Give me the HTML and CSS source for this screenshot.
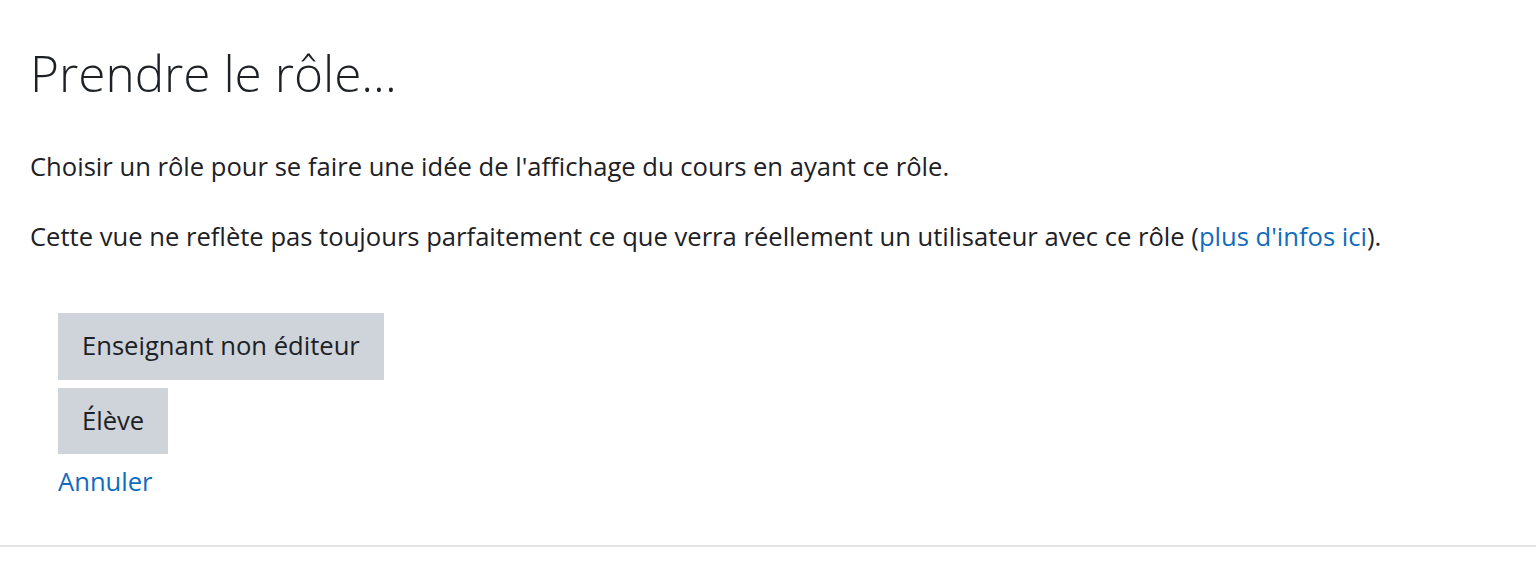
FILE: index.html
```html
<!DOCTYPE html>
<html lang="fr">
<head>
<meta charset="utf-8">
<title>Prendre le rôle...</title>
<link rel="stylesheet" href="styles.css">
</head>
<body>
<main class="page">
  <h2 class="title">Prendre le rôle...</h2>
  <p class="text">Choisir un rôle pour se faire une idée de l'affichage du cours en ayant ce rôle.</p>
  <p class="text">Cette vue ne reflète pas toujours parfaitement ce que verra réellement un utilisateur avec ce rôle (<a class="link" href="#">plus d'infos ici</a>).</p>
  <div class="roles">
    <button class="btn" type="button">Enseignant non éditeur</button>
    <button class="btn" type="button">Élève</button>
    <a class="link cancel" href="#">Annuler</a>
  </div>
</main>
<footer class="footer"></footer>
</body>
</html>
```

FILE: styles.css
```css
html, body {
  margin: 0;
  padding: 0;
  background: #ffffff;
}

body {
  font-family: "Open Sans", "Noto Sans", "Liberation Sans", sans-serif;
  color: #1d2125;
  font-size: 25.6px;
  line-height: 40.5px;
}

.page {
  padding: 40.5px 30px 42px 30px;
}

.title {
  margin: 0 0 42px 0;
  font-size: 49.5px;
  line-height: 64.8px;
  font-weight: 300;
  color: #1d2125;
}

.text {
  margin: 0 0 29px 0;
}

.link {
  color: #0f6cbf;
  text-decoration: none;
}

.roles {
  padding-top: 27px;
  margin-left: 28px;
  display: flex;
  flex-direction: column;
  align-items: flex-start;
  gap: 8px;
}

.btn {
  font-family: inherit;
  font-size: 25.6px;
  line-height: 40.5px;
  color: #1d2125;
  background: #ced4da;
  border: 2px solid #ced4da;
  border-radius: 0;
  padding: 11px 22px;
  margin: 0;
  cursor: pointer;
}

.cancel {
  display: block;
}

.footer {
  border-top: 2px solid #e2e2e2;
  height: 30px;
}
```
